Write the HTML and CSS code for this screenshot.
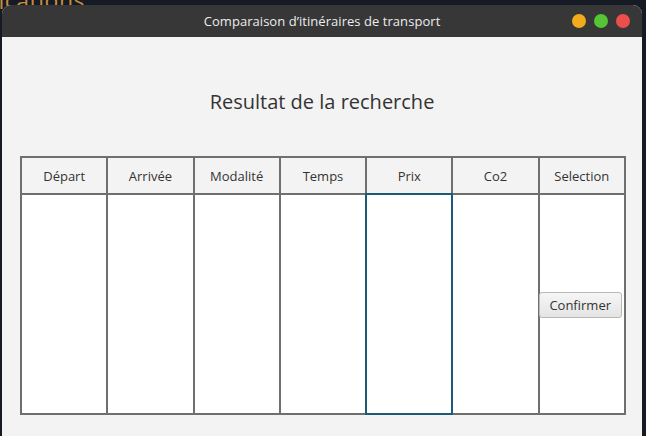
FILE: index.html
```html
<!DOCTYPE html>
<html lang="fr">
<head>
<meta charset="utf-8">
<title>Comparaison d’itinéraires de transport</title>
<link rel="stylesheet" href="styles.css">
</head>
<body>
<div class="desktop">
  <div class="bg-text">Applications</div>
  <div class="window">
    <div class="titlebar">
      <span class="title">Comparaison d’itinéraires de transport</span>
      <div class="lights">
        <span class="light yellow"></span>
        <span class="light green"></span>
        <span class="light red"></span>
      </div>
    </div>
    <div class="content">
      <h1 class="heading">Resultat de la recherche</h1>
      <div class="table">
        <div class="th">Départ</div>
        <div class="th">Arrivée</div>
        <div class="th">Modalité</div>
        <div class="th">Temps</div>
        <div class="th">Prix</div>
        <div class="th">Co2</div>
        <div class="th">Selection</div>
        <div class="td"></div>
        <div class="td"></div>
        <div class="td"></div>
        <div class="td"></div>
        <div class="td focused"></div>
        <div class="td"></div>
        <div class="td action"><button class="btn">Confirmer</button></div>
      </div>
    </div>
  </div>
</div>
</body>
</html>
```
FILE: styles.css
```css
* { box-sizing: border-box; }
html, body {
  margin: 0;
  padding: 0;
  width: 646px;
  height: 436px;
  overflow: hidden;
  background: #161a24;
  font-family: "Open Sans", "Noto Sans", sans-serif;
}
.desktop {
  position: relative;
  width: 646px;
  height: 436px;
  padding: 5px 4px 0 2px;
}
.bg-text {
  position: absolute;
  left: -52px;
  top: -16px;
  font-size: 23px;
  color: #c98d3c;
  letter-spacing: 0.5px;
}
.window {
  position: relative;
  width: 640px;
  height: 431px;
  border-radius: 9px 9px 0 0;
  overflow: hidden;
  background: #f3f3f3;
  display: flex;
  flex-direction: column;
}
.titlebar {
  height: 32px;
  flex: none;
  background: #373737;
  display: flex;
  align-items: center;
  justify-content: center;
  position: relative;
}
.title {
  color: #ececec;
  font-size: 13px;
  letter-spacing: 0.05px;
}
.lights {
  position: absolute;
  right: 12px;
  top: 9px;
  display: flex;
  gap: 8px;
}
.light {
  width: 14px;
  height: 14px;
  border-radius: 50%;
  display: block;
}
.yellow { background: #f0ac1c; }
.green { background: #55c435; }
.red { background: #ea4f4c; }
.content {
  flex: 1;
  padding: 51px 0 0 18px;
}
.heading {
  margin: 0 0 0 -18px;
  height: 68px;
  line-height: 28px;
  text-align: center;
  font-size: 20px;
  font-weight: 400;
  color: #333333;
}
.table {
  width: 606px;
  display: grid;
  grid-template-columns: repeat(7, 1fr);
  grid-template-rows: 35px 218px;
  gap: 2px;
  padding: 2px;
  background: #6f6f6f;
}
.th {
  background: #f3f3f3;
  display: flex;
  align-items: center;
  justify-content: center;
  font-size: 13px;
  color: #333333;
}
.td {
  background: #ffffff;
}
.focused {
  position: relative;
  outline: 2px solid #1c5b76;
}
.action {
  display: flex;
  align-items: center;
}
.btn {
  margin-left: -1px;
  margin-top: 2px;
  width: 83px;
  height: 26px;
  border: 1px solid #b8b8b8;
  border-radius: 3px;
  background: linear-gradient(#f6f6f6, #e4e4e4);
  font-family: "Open Sans", "Noto Sans", sans-serif;
  font-size: 13px;
  color: #333333;
  padding: 0;
}
```
